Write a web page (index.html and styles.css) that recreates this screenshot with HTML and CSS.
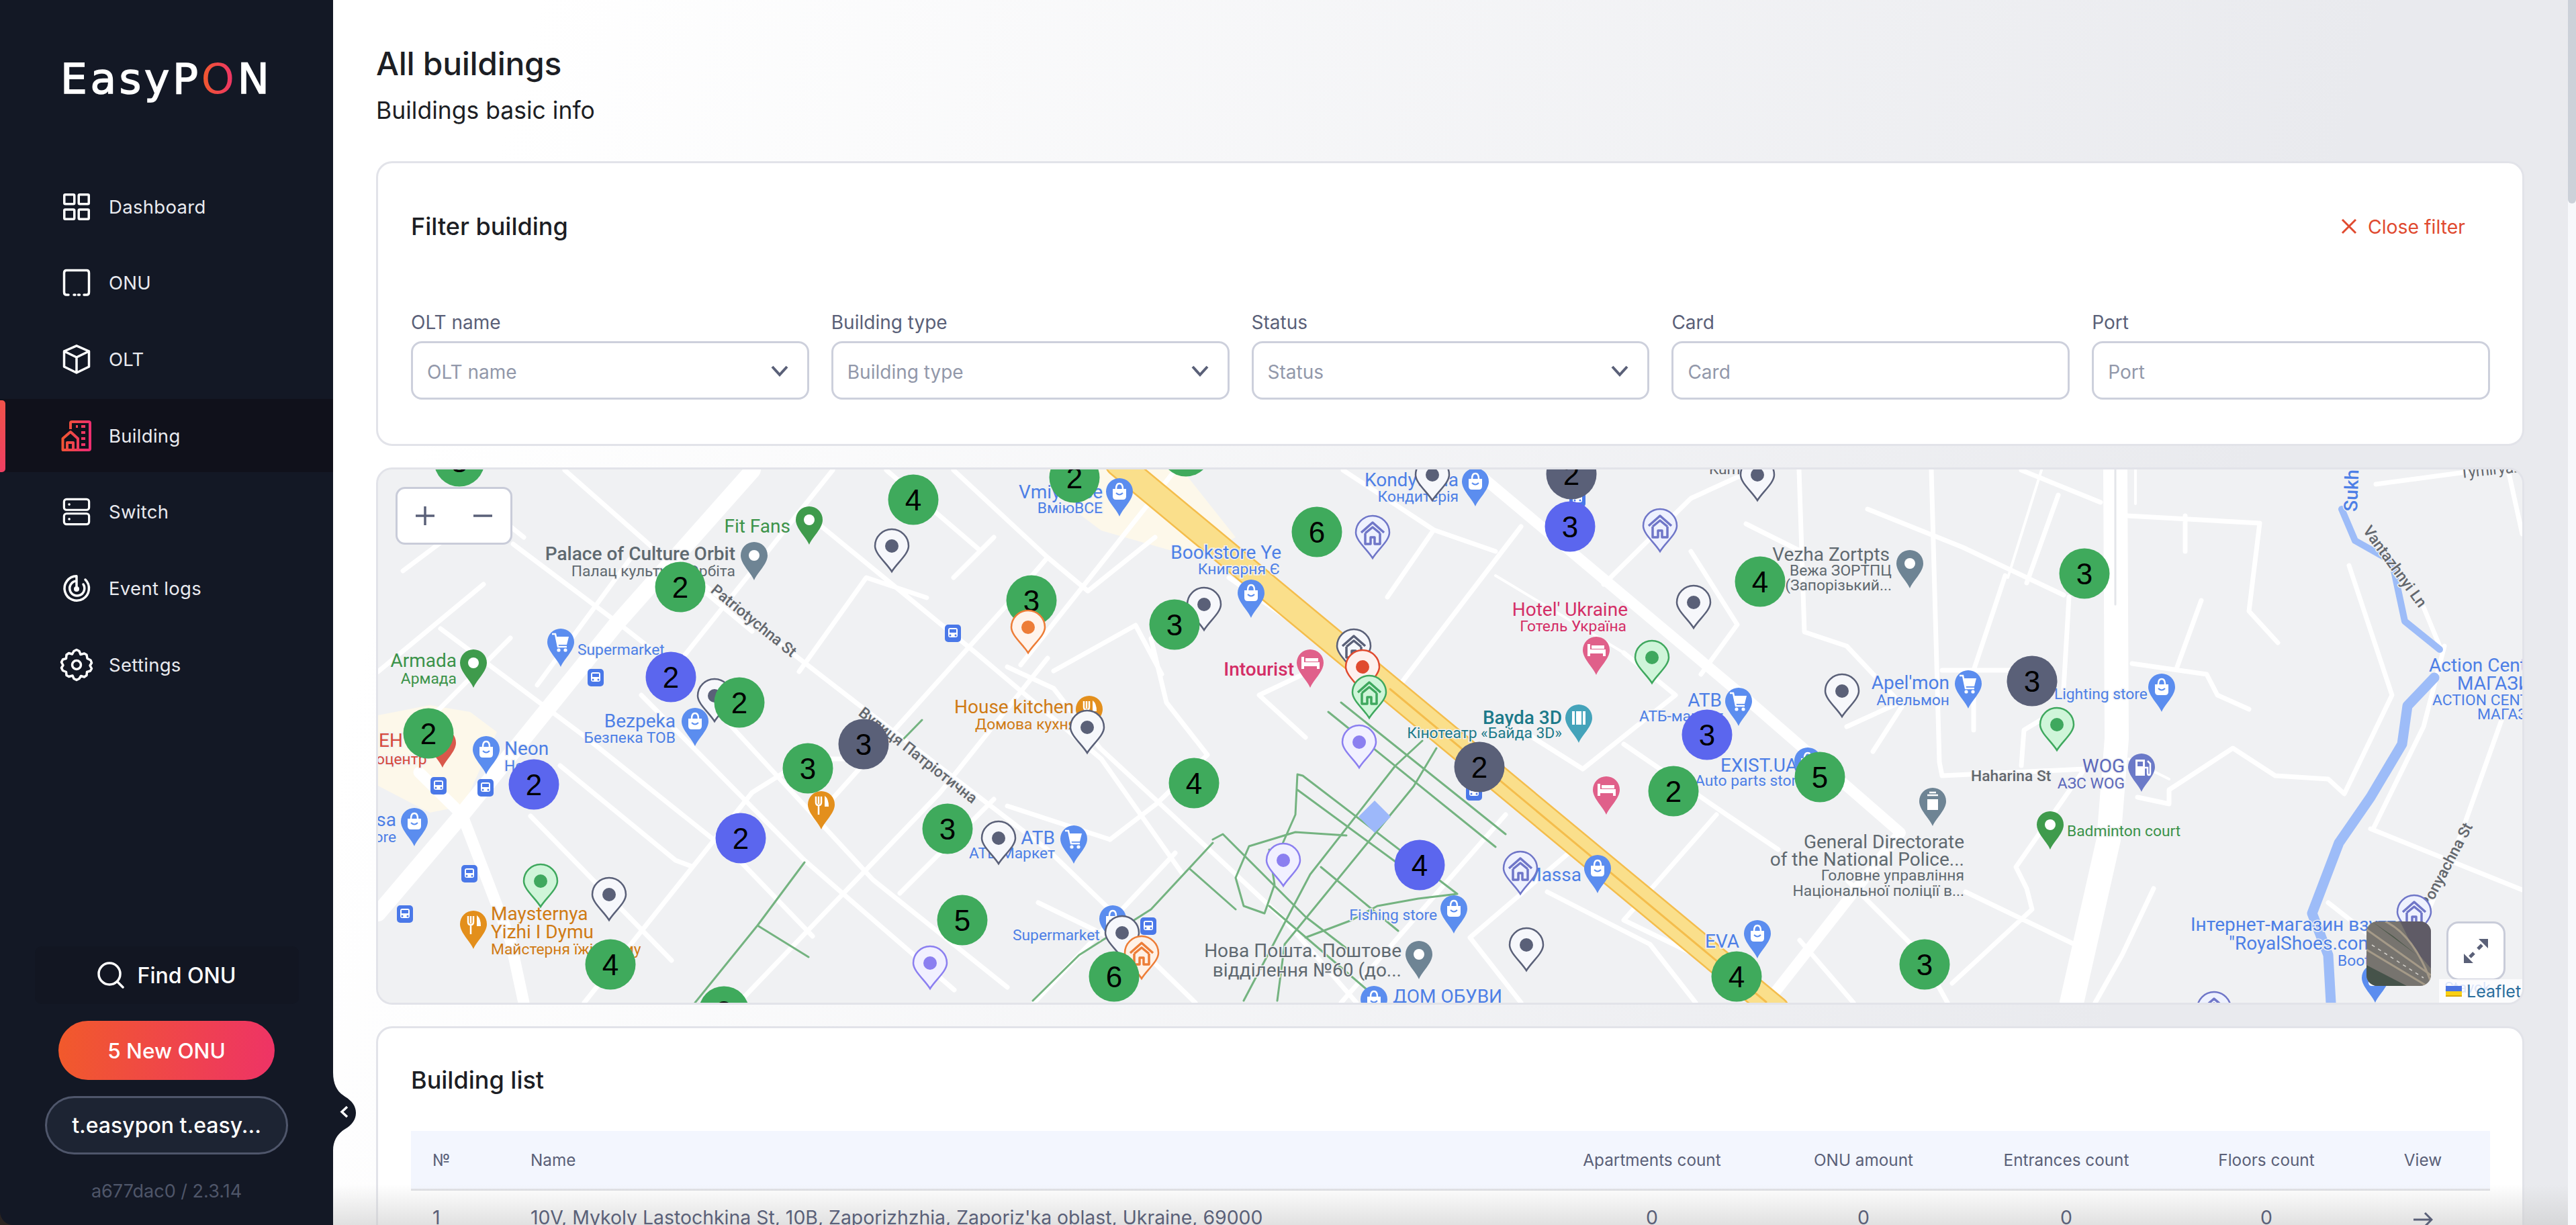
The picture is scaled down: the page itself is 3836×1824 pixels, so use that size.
FILE: index.html
```html
<!DOCTYPE html>
<html lang="en">
<head>
<meta charset="utf-8">
<title>EasyPON - All buildings</title>
<link rel="stylesheet" href="styles.css">
</head>
<body>
<svg class="defs" width="0" height="0" aria-hidden="true">
  <defs>
    <linearGradient id="brand" x1="0" y1="0" x2="1" y2="0.2"><stop offset="0" stop-color="#f15a2b"/><stop offset="1" stop-color="#ee2f6f"/></linearGradient>
    <g id="pin-dot"><path class="head" d="M0 0C-8-13-25-26-25-38A25 25 0 1 1 25-38C25-26 8-13 0 0Z"/><circle class="dot" cx="0" cy="-38" r="10"/></g>
    <g id="pin-house"><path class="head" d="M0 0C-8-13-25-26-25-38A25 25 0 1 1 25-38C25-26 8-13 0 0Z"/><path class="roof" d="M-17-38L0-53L17-38M-11-37V-21H-3V-31H3V-21H11V-37M-11-37L0-46L11-37"/></g>
    <path id="drop" d="M0 0C-5-12-20-24-20-37A20 20 0 1 1 20-37C20-24 5-12 0 0Z"/>
    <g id="poi-bag"><use href="#drop" class="dropfill"/><path class="wh" d="M-10-41H10V-30Q10-25 5-25H-5Q-10-25-10-30Z"/><path class="wl" d="M-5-41Q-5-49 0-49Q5-49 5-41"/><path class="cut" d="M-5-35Q0-30 5-35"/></g>
    <g id="poi-cart"><use href="#drop" class="dropfill"/><path class="wh" d="M-8-45H12L9-33H-5Z"/><path class="wl" d="M-13-49H-8L-4-30H9"/><circle class="wh" cx="-3" cy="-25" r="2.6"/><circle class="wh" cx="7" cy="-25" r="2.6"/></g>
    <g id="poi-dot"><use href="#drop" class="dropfill"/><circle class="wh" cx="0" cy="-37" r="8"/></g>
    <g id="poi-food"><use href="#drop" class="dropfill"/><path class="wl" d="M-8-49V-40Q-8-36-4-36V-22M0-49V-40Q0-36-4-36M-4-49V-38"/><path class="wh" d="M5-22V-50Q11-46 11-34H5Z"/></g>
    <g id="poi-bed"><use href="#drop" class="dropfill"/><path class="wh" d="M-13-46H-9V-38H14V-28H10V-32H-9V-28H-13Z"/><rect class="wh" x="-7" y="-44" width="19" height="5"/></g>
    <g id="poi-fuel"><use href="#drop" class="dropfill"/><path class="wh" d="M-9-48H5V-24H-9Z"/><rect class="cutf" x="-6" y="-45" width="8" height="7"/><path class="wl" d="M5-36H9V-28Q9-25 11-25Q13-25 13-28V-42L9-46"/></g>
    <g id="poi-film"><use href="#drop" class="dropfill"/><rect class="wh" x="-10" y="-47" width="20" height="20"/><path class="cutl" d="M-5-47V-27M5-47V-27"/></g>
    <g id="poi-gov"><use href="#drop" class="dropfill"/><path class="wh" d="M-8-40H8V-24H-8Z"/><path class="wl" d="M-8-46H8M-5-50H5"/></g>
    <g id="transit"><rect x="-12" y="-13" width="24" height="26" rx="5" class="tr"/><rect x="-7" y="-8" width="14" height="14" rx="3" class="wh"/><rect x="-5" y="-6" width="10" height="5" class="tr"/><circle cx="-4" cy="3" r="1.5" class="tr"/><circle cx="4" cy="3" r="1.5" class="tr"/></g>
  </defs>
</svg>

<aside class="sidebar">
  <div class="logo">Easy<span class="logo-p">P</span><span class="logo-o">O</span>N</div>
  <nav class="nav">
    <a class="nav-item">
      <svg class="nav-icon" viewBox="0 0 40 40"><g class="ic"><rect x="1.750" y="1.750" width="15" height="14" rx="1.500"/><rect x="23.250" y="1.750" width="15" height="14" rx="1.500"/><rect x="1.750" y="24" width="15" height="14.250" rx="1.500"/><rect x="23.250" y="24" width="15" height="14.250" rx="1.500"/></g></svg>
      <span>Dashboard</span></a>
    <a class="nav-item">
      <svg class="nav-icon" viewBox="0 0 40 40"><path class="ic" d="M8 38H5Q1.500 38 1.500 34V5.500Q1.500 1.500 5 1.500H35Q38.500 1.500 38.500 5.500V34Q38.500 38 35 38H31M16 38H18M22.500 38H24.500"/></svg>
      <span>ONU</span></a>
    <a class="nav-item">
      <svg class="nav-icon" viewBox="0 0 40 44"><path class="ic" d="M20 1.800L38.500 10V33L20 42L1.500 33V10ZM1.500 10L20 19L38.500 10M20 19V42"/></svg>
      <span>OLT</span></a>
    <a class="nav-item active">
      <svg class="nav-icon build" viewBox="0 0 44 46"><path class="ic-grad" d="M14 13V4Q14 2 16 2H41Q43 2 43 4V42Q43 44 41 44H2.500V27L14 17L25 27V44M31 44H2.500M9 44V33H18V44M22 9H25M30 9H36M30 18H36M30 27H36M30 36H36"/></svg>
      <span>Building</span></a>
    <a class="nav-item">
      <svg class="nav-icon" viewBox="0 0 44 44"><g class="ic"><rect x="1.500" y="1.500" width="41" height="17.500" rx="4"/><rect x="1.500" y="25" width="41" height="17.500" rx="4"/></g><circle class="wh" cx="10" cy="10" r="2"/><circle class="wh" cx="10" cy="34" r="2"/></svg>
      <span>Switch</span></a>
    <a class="nav-item">
      <svg class="nav-icon" viewBox="0 0 40 40"><path class="ic" d="M20 1.800A18.200 18.200 0 1 0 33 7M20 9A11 11 0 1 0 30 14M20 2V21"/><circle class="wh" cx="20" cy="21" r="4"/></svg>
      <span>Event logs</span></a>
    <a class="nav-item">
      <svg class="nav-icon gear" viewBox="0 0 48 48"><path class="ic" d="M20 3.500L24 1.500L28 3.500L30 8.500L35.500 7L39 9L40 14.500L45 17L46.500 21L44 25L46.500 29.500L44.500 33L39.500 34.500L39 39.500L35.500 42L30.500 40.500L28 44.500L24 46.500L20 44.500L18 40L12.500 41.500L9 39.500L8.500 34.500L3.500 32.500L1.500 28.500L4 24.500L1.500 20L3.500 16L8.500 14.500L9 9L12.500 6.500L17.500 8Z"/><circle class="ic" cx="24" cy="24" r="6.500"/></svg>
      <span>Settings</span></a>
  </nav>
  <div class="side-bottom">
    <button class="find-btn" type="button">
      <svg class="find-icon" viewBox="0 0 40 40"><circle class="ic" cx="18" cy="18" r="16"/><path class="ic" d="M30 30L38 38"/></svg>
      <span>Find ONU</span>
    </button>
    <button class="new-btn" type="button">5 New ONU</button>
    <button class="user-btn" type="button">t.easypon t.easy...</button>
    <div class="version">a677dac0 / 2.3.14</div>
  </div>
  <svg class="collapse" viewBox="0 0 36 116"><path class="collapse-bg" d="M0 0C0 20 8 30 18 36C28 42 34 50 34 60C34 70 28 78 18 84C8 90 0 100 0 116Z"/><path class="chev" d="M21 51L13 58.500L21 66"/></svg>
</aside>

<main class="main">
  <header class="head-block">
    <h1>All buildings</h1>
    <p>Buildings basic info</p>
  </header>

  <section class="card filter">
    <div class="card-row">
      <h2>Filter building</h2>
      <button class="close" type="button"><svg viewBox="0 0 24 24"><path d="M2 2L22 22M22 2L2 22"/></svg>Close filter</button>
    </div>
    <div class="fields">
      <div class="field"><label>OLT name</label><div class="input">OLT name<svg class="caret" viewBox="0 0 26 18"><path d="M2 3L13 15L24 3"/></svg></div></div>
      <div class="field"><label>Building type</label><div class="input">Building type<svg class="caret" viewBox="0 0 26 18"><path d="M2 3L13 15L24 3"/></svg></div></div>
      <div class="field"><label>Status</label><div class="input">Status<svg class="caret" viewBox="0 0 26 18"><path d="M2 3L13 15L24 3"/></svg></div></div>
      <div class="field"><label>Card</label><div class="input">Card</div></div>
      <div class="field"><label>Port</label><div class="input">Port</div></div>
    </div>
  </section>

  <section class="map">
    <svg class="map-svg" viewBox="563 699 3193 794" preserveAspectRatio="none">
      <rect x="563" y="699" width="3193" height="794" class="land"/>
      <path class="beige" d="M563 1065L640 1050L700 1060L740 1090L690 1200L640 1210L563 1170ZM1560 699H1760L1840 800L1780 830L1640 790L1600 760Z"/>

      <path class="st" d="M841 700L1000 840L1120 940M1204 768L1453 972L1640 1130L1760 1300M1051 873L1281 1051L1560 1265L1700 1400M764 810L917 925L1000 990M656 936L866 1093L1100 1280L1210 1394M955 1035L1198 1281L1421 1474M834 1140L1006 1281L1030 1290M790 1215L1000 1430M1060 1050L1300 1310L1500 1470M1000 1000L1240 700M1190 1000L1290 860L1380 890M1230 1200L1500 900L1560 830M1100 1493L1400 1180L1560 980M1340 1330L1480 1190M1540 1493L1750 1270M870 1493L1120 1180L1200 1130L1290 1130M563 1000L720 870M620 1090L760 950M600 850L680 790M800 1020L940 830M680 720L780 800M1420 700L1560 830L1620 880L1720 800M1320 700L1460 820M1480 800L1420 860M1750 700L1520 990"/>
      <path class="st" d="M2066 889L2135 789L2227 821M2265 784L2089 1014M1944 1098L1875 1035L1951 999M1714 951L1737 1046L1798 1124L1722 1197L1653 1250M1569 999L1691 931L1730 1004M1500 993L1569 1025L1638 1114L1745 1213L1913 1370L2020 1493M1653 1250L1500 1200M1546 1344L1707 1422L1780 1493M2242 1213L1997 1493M2342 1265L2189 1396L2265 1493M2304 1328L2457 1406L2525 1493M2556 1213L2418 1370L2525 1422M2418 1108L2571 1213L2648 1265M2357 1145L2265 1087M2357 1145L2495 1035L2418 972M2388 870L2518 742L2610 700M2518 821L2587 930L2533 1004M2000 700L2135 789M1830 860L1960 950L2010 1000"/>
      <path class="st" d="M2876 700L2888 1135L2892 1155L3104 1145M2679 700L2687 941L2750 962L2829 1046L2750 1082M2600 780L2680 820M2781 758L2923 815L3073 886M3010 700L3128 748M3065 737L3018 868M3081 889L3073 1025M2986 857L2939 998M2892 998L2994 998M2939 998L2939 1087M2836 1046L2789 1119M3010 1140L3014 1087L3049 1066M3104 1145L3002 1291L3018 1323L3026 1354L2907 1464M2927 1328L3089 1406M3168 768L3365 779L3349 910L3392 957M3254 821L3254 768M3278 894L3242 993M3175 988L3286 1004L3302 1035L3349 1056M3183 1187L3230 1197L3230 1176L3325 1114L3388 1155L3467 1160L3491 1182L3562 1035L3498 842M3530 1234L3756 1325M3640 962L3609 1082L3534 1234M3727 1067L3664 1244L3617 1354M3538 721L3672 703M3735 700L3756 795M3467 1344L3546 1406M3207 1323L3160 1422L3120 1493M3609 904L3633 962M2750 1310L2860 1420L2900 1493M2680 1400L2760 1493"/>
      <path class="st-thin" d="M2227 857L2418 972M3040 700L2990 860M3180 700V750M3170 1130L3230 1160"/>
      <path class="wide w1" d="M1121 700L917 930L688 1213L563 1360"/>
      <path class="wide w2" d="M688 1213L760 1400L780 1493M624 1150L688 1213"/>
      <path class="wide w3" d="M2195 700L2600 1040L2830 1240L2631 1493"/>
      <path class="wide w4" d="M3150 699L3152 1100L3140 1250L3085 1493"/>
      <path class="median" d="M3150 699V900"/>
      <path class="river" d="M3487 758L3507 805L3562 836L3581 925L3633 967"/>
      <path class="river r2" d="M3625 1009L3585 1051L3577 1108L3530 1187L3483 1255L3443 1360L3467 1422L3471 1493"/>
      <path class="road-edge" d="M1665 690L2645 1503"/>
      <path class="road-yel" d="M1665 690L2645 1503"/>
      <path class="road-line" d="M2070 1026L2630 1492"/>
      <path class="green" d="M1997 1046L2242 1242M1978 1060L2227 1261M1932 1153L1940 1155L2170 1331M1932 1176L2082 1286M2118 1103L2078 1140L1951 1302L1852 1490M2139 1114L2105 1171L1913 1406L1902 1490M1932 1153L1929 1213L1906 1265M2005 1244L1929 1239L1860 1260L1840 1307L1852 1349L1883 1360L1898 1317L1890 1265M1806 1250L1821 1242L1944 1365L2005 1412M1772 1294L1840 1354M1890 1349L2036 1474M1967 1291L2082 1386M1806 1255L1714 1354L1607 1422L1538 1490M2170 1331L2112 1338L2051 1349L2013 1370L1944 1396M1198 1284L1128 1378L1035 1493M1128 1378L1204 1425M1373 1072L1338 1108"/>
      <path class="diamond" d="M2047 1192L2071 1216L2047 1240L2023 1216Z"/>

      <!-- map labels -->
      <g class="lbl">
        <text class="l t c-gr b e" x="1095" y="834">Palace of Culture Orbit</text>
        <text class="l s c-gr e" x="1095" y="858">Палац культури Орбіта</text>
        <text class="l t c-g e" x="1177" y="793">Fit Fans</text>
        <text class="l s c-b" x="860" y="975">Supermarket</text>
        <text class="l t c-g e" x="680" y="993">Armada</text>
        <text class="l s c-g e" x="680" y="1018">Армада</text>
        <text class="l t c-b e" x="1006" y="1083">Bezpeka</text>
        <text class="l s c-b e" x="1006" y="1106">Безпека ТОВ</text>
        <text class="l t c-r" x="564" y="1112">ЕН</text>
        <text class="l s c-r" x="560" y="1138">оцентр</text>
        <text class="l t c-b" x="751" y="1124">Neon</text>
        <text class="l s c-b" x="751" y="1148">Неон</text>
        <text class="l t c-b e" x="590" y="1230">Massa</text>
        <text class="l s c-b e" x="590" y="1254">Store</text>
        <text class="l t c-o" x="731" y="1370">Maysternya</text>
        <text class="l t c-o" x="731" y="1397">Yizhi I Dymu</text>
        <text class="l s c-o" x="731" y="1421">Майстерня їжі і дому</text>
        <text class="l t c-b e" x="1571" y="1257">ATB</text>
        <text class="l s c-b e" x="1571" y="1278">АТБ-Маркет</text>
        <text class="l t c-b e" x="1642" y="742">VmiyuVse</text>
        <text class="l s c-b e" x="1642" y="764">ВміюВСЕ</text>
        <text class="l t c-b e" x="2172" y="724">Kondyteriia</text>
        <text class="l s c-b e" x="2172" y="747">Кондитерія</text>
        <text class="l t c-b e" x="1908" y="832">Bookstore Ye</text>
        <text class="l s c-b e" x="1906" y="855">Книгарня Є</text>
        <text class="l t c-p b e" x="1927" y="1006">Intourist</text>
        <text class="l t c-p e" x="2424" y="917">Hotel' Ukraine</text>
        <text class="l s c-p e" x="2422" y="940">Готель Україна</text>
        <text class="l t c-o" x="1421" y="1062">House kitchen</text>
        <text class="l s c-o" x="1452" y="1086">Домова кухня</text>
        <text class="l t c-t b e" x="2326" y="1078">Bayda 3D</text>
        <text class="l s c-t e" x="2326" y="1099">Кінотеатр «Байда 3D»</text>
        <text class="l t c-b e" x="2564" y="1052">ATB</text>
        <text class="l s c-b" x="2441" y="1074">АТБ-маркет</text>
        <text class="l t c-b" x="2562" y="1149">EXIST.UA</text>
        <text class="l s c-b" x="2524" y="1170">Auto parts store</text>
        <text class="l t c-b e" x="2355" y="1312">Massa</text>
        <text class="l s c-b e" x="2140" y="1370">Fishing store</text>
        <text class="l s c-b" x="1508" y="1400">Supermarket</text>
        <text class="l t c-gr e" x="2087" y="1425">Нова Пошта. Поштове</text>
        <text class="l t c-gr e" x="2087" y="1454">відділення №60 (до...</text>
        <text class="l t c-b e" x="2590" y="1411">EVA</text>
        <text class="l t c-b" x="2074" y="1493">ДОМ ОБУВИ</text>
        <text class="l t c-gr e" x="2814" y="835">Vezha Zortpts</text>
        <text class="l s c-gr e" x="2817" y="857">Вежа ЗОРТПЦ</text>
        <text class="l s c-gr e" x="2817" y="879">(Запорізький...</text>
        <text class="l t c-b e" x="2903" y="1026">Apel'mon</text>
        <text class="l s c-b e" x="2903" y="1050">Апельмон</text>
        <text class="l s c-b" x="3059" y="1041">Lighting store</text>
        <text class="l t c-i e" x="3164" y="1150">WOG</text>
        <text class="l s c-i e" x="3164" y="1174">АЗС WOG</text>
        <text class="l s c-st b" x="2935" y="1163">Haharina St</text>
        <text class="l t c-gr e" x="2925" y="1263">General Directorate</text>
        <text class="l t c-gr e" x="2925" y="1289">of the National Police...</text>
        <text class="l s c-gr e" x="2925" y="1311">Головне управління</text>
        <text class="l s c-gr e" x="2925" y="1334">Національної поліції в...</text>
        <text class="l s c-g" x="3078" y="1245">Badminton court</text>
        <text class="l t c-b" x="3617" y="1000">Action Center</text>
        <text class="l t c-b" x="3659" y="1027">МАГАЗИН</text>
        <text class="l s c-b" x="3622" y="1050">ACTION CENTER</text>
        <text class="l s c-b" x="3689" y="1071">МАГАЗИН</text>
        <text class="l t c-b" x="3262" y="1386">Інтернет-магазин взуття</text>
        <text class="l t c-b" x="3319" y="1414">"RoyalShoes.com"</text>
        <text class="l s c-b" x="3481" y="1438">Boots</text>
        <text class="l s c-b" x="3640" y="1478">Stavok</text>
        <text class="l t c-b b" x="3510" y="762" transform="rotate(-88 3510 762)">Sukh</text>
        <text class="l s c-st b" x="3518" y="790" transform="rotate(54 3518 790)">Vantazhnyi Ln</text>
        <text class="l s c-st b" x="3617" y="1354" transform="rotate(-62 3617 1354)">Ponyachna St</text>
        <text class="l s c-st" x="3664" y="712" transform="rotate(-6 3664 712)">Tymiryaz</text>
        <text class="l s c-st" x="2545" y="706">Kum</text>
        <text class="l s c-st b" x="1057" y="881" transform="rotate(39 1057 881)">Patriotychna St</text>
        <text class="l s c-st b" x="1277" y="1064" transform="rotate(38 1277 1064)">Вулиця Патріотична</text>
      </g>

      <!-- google pois -->
      <use href="#poi-dot" class="p-g" x="1205" y="811"/>
      <use href="#poi-dot" class="p-s" x="1123" y="864"/>
      <use href="#poi-cart" class="p-b" x="835" y="993"/>
      <use href="#poi-dot" class="p-g" x="705" y="1024"/>
      <use href="#poi-bag" class="p-b" x="1035" y="1111"/>
      <use href="#poi-dot" class="p-r" x="659" y="1143"/>
      <use href="#poi-bag" class="p-b" x="724" y="1153"/>
      <use href="#poi-bag" class="p-b" x="617" y="1260"/>
      <use href="#poi-food" class="p-o" x="1223" y="1235"/>
      <use href="#poi-food" class="p-o" x="705" y="1413"/>
      <use href="#poi-cart" class="p-b" x="1599" y="1286"/>
      <use href="#poi-bag" class="p-b" x="1667" y="769"/>
      <use href="#poi-bag" class="p-b" x="2197" y="754"/>
      <use href="#poi-bag" class="p-b" x="1863" y="920"/>
      <use href="#poi-bed" class="p-p" x="1951" y="1024"/>
      <use href="#poi-bed" class="p-p" x="2377" y="1005"/>
      <use href="#poi-food" class="p-o" x="1622" y="1093"/>
      <use href="#poi-film" class="p-t" x="2351" y="1106"/>
      <use href="#poi-cart" class="p-b" x="2589" y="1081"/>
      <use href="#poi-bag" class="p-b" x="2692" y="1170"/>
      <use href="#poi-bed" class="p-p" x="2392" y="1213"/>
      <use href="#poi-bag" class="p-b" x="2379" y="1330"/>
      <use href="#poi-bag" class="p-b" x="2165" y="1390"/>
      <use href="#poi-bag" class="p-b" x="1657" y="1405"/>
      <use href="#poi-dot" class="p-s" x="2113" y="1458"/>
      <use href="#poi-bag" class="p-b" x="2617" y="1427"/>
      <use href="#poi-bag" class="p-b" x="2046" y="1525"/>
      <use href="#poi-dot" class="p-s" x="2844" y="876"/>
      <use href="#poi-cart" class="p-b" x="2931" y="1055"/>
      <use href="#poi-bag" class="p-b" x="3219" y="1060"/>
      <use href="#poi-fuel" class="p-i" x="3189" y="1179"/>
      <use href="#poi-gov" class="p-s" x="2878" y="1230"/>
      <use href="#poi-dot" class="p-g" x="3053" y="1265"/>
      <use href="#poi-bag" class="p-b" x="3537" y="1493"/>

      <use href="#transit" x="887" y="1009"/>
      <use href="#transit" x="653" y="1170"/>
      <use href="#transit" x="723" y="1173"/>
      <use href="#transit" x="699" y="1301"/>
      <use href="#transit" x="603" y="1361"/>
      <use href="#transit" x="1419" y="943"/>
      <use href="#transit" x="1710" y="1379"/>
      <use href="#transit" x="2195" y="1179"/>
      <use href="#transit" x="2349" y="742"/>

      <!-- building pins below the clusters -->
      <use href="#pin-dot" class="m-d" x="1064" y="1074"/>
      <use href="#pin-dot" class="m-d" x="1793" y="938"/>
      <use href="#pin-dot" class="m-d" x="1328" y="851"/>

      <!-- clusters -->
      <g class="clusters">
        <circle class="cg" cx="684" cy="687" r="37.500"/><text x="684" y="687">3</text>
        <circle class="cg" cx="1360" cy="744" r="37.500"/><text x="1360" y="744">4</text>
        <circle class="cg" cx="1013" cy="874" r="37.500"/><text x="1013" y="874">2</text>
        <circle class="cg" cx="1536" cy="894" r="37.500"/><text x="1536" y="894">3</text>
        <circle class="cb" cx="999" cy="1008" r="37.500"/><text x="999" y="1008">2</text>
        <circle class="cg" cx="1101" cy="1046" r="37.500"/><text x="1101" y="1046">2</text>
        <circle class="cg" cx="638" cy="1092" r="37.500"/><text x="638" y="1092">2</text>
        <circle class="cb" cx="795" cy="1168" r="37.500"/><text x="795" y="1168">2</text>
        <circle class="cd" cx="1286" cy="1108" r="37.500"/><text x="1286" y="1108">3</text>
        <circle class="cg" cx="1203" cy="1144" r="37.500"/><text x="1203" y="1144">3</text>
        <circle class="cb" cx="1103" cy="1248" r="37.500"/><text x="1103" y="1248">2</text>
        <circle class="cg" cx="1411" cy="1234" r="37.500"/><text x="1411" y="1234">3</text>
        <circle class="cg" cx="1433" cy="1370" r="37.500"/><text x="1433" y="1370">5</text>
        <circle class="cg" cx="909" cy="1436" r="37.500"/><text x="909" y="1436">4</text>
        <circle class="cg" cx="1078" cy="1506" r="37.500"/><text x="1078" y="1506">3</text>
        <circle class="cg" cx="1600" cy="711" r="37.500"/><text x="1600" y="711">2</text>
        <circle class="cg" cx="1766" cy="672" r="37.500"/><text x="1766" y="672">3</text>
        <circle class="cg" cx="1961" cy="792" r="37.500"/><text x="1961" y="792">6</text>
        <circle class="cd" cx="2340" cy="706" r="37.500"/><text x="2340" y="706">2</text>
        <circle class="cb" cx="2338" cy="784" r="37.500"/><text x="2338" y="784">3</text>
        <circle class="cg" cx="2621" cy="866" r="37.500"/><text x="2621" y="866">4</text>
        <circle class="cg" cx="1749" cy="930" r="37.500"/><text x="1749" y="930">3</text>
        <circle class="cg" cx="1778" cy="1166" r="37.500"/><text x="1778" y="1166">4</text>
        <circle class="cd" cx="2203" cy="1142" r="37.500"/><text x="2203" y="1142">2</text>
        <circle class="cb" cx="2542" cy="1094" r="37.500"/><text x="2542" y="1094">3</text>
        <circle class="cg" cx="2492" cy="1178" r="37.500"/><text x="2492" y="1178">2</text>
        <circle class="cb" cx="2114" cy="1288" r="37.500"/><text x="2114" y="1288">4</text>
        <circle class="cg" cx="2586" cy="1454" r="37.500"/><text x="2586" y="1454">4</text>
        <circle class="cg" cx="3104" cy="854" r="37.500"/><text x="3104" y="854">3</text>
        <circle class="cd" cx="3026" cy="1014" r="37.500"/><text x="3026" y="1014">3</text>
        <circle class="cg" cx="2710" cy="1157" r="37.500"/><text x="2710" y="1157">5</text>
        <circle class="cg" cx="2866" cy="1436" r="37.500"/><text x="2866" y="1436">3</text>
      </g>

      <!-- building pins above the clusters -->
      <use href="#pin-dot" class="m-o" x="1531" y="972"/>
      <use href="#pin-dot" class="m-d" x="1487" y="1286"/>
      <use href="#pin-dot" class="m-l" x="805" y="1350"/>
      <use href="#pin-dot" class="m-d" x="907" y="1370"/>
      <use href="#pin-dot" class="m-v" x="1385" y="1472"/>
      <use href="#pin-dot" class="m-d" x="2133" y="745"/>
      <use href="#pin-dot" class="m-d" x="2617" y="745"/>
      <use href="#pin-house" class="m-h" x="2044" y="831"/>
      <use href="#pin-house" class="m-h" x="2472" y="821"/>
      <use href="#pin-dot" class="m-d" x="2522" y="935"/>
      <use href="#pin-house" class="m-d" x="2016" y="1000"/>
      <use href="#pin-dot" class="m-r" x="2029" y="1031"/>
      <use href="#pin-house" class="m-l" x="2039" y="1069"/>
      <use href="#pin-dot" class="m-l" x="2460" y="1017"/>
      <use href="#pin-dot" class="m-v" x="2024" y="1143"/>
      <use href="#pin-dot" class="m-d" x="1619" y="1121"/>
      <use href="#pin-dot" class="m-v" x="1911" y="1319"/>
      <use href="#pin-house" class="m-h" x="2264" y="1331"/>
      <use href="#pin-dot" class="m-d" x="2273" y="1445"/>
      <use href="#pin-dot" class="m-d" x="1671" y="1427"/>
      <use href="#pin-house" class="m-oh" x="1700" y="1457"/>
      <use href="#pin-dot" class="m-d" x="2743" y="1067"/>
      <use href="#pin-dot" class="m-l" x="3063" y="1117"/>
      <use href="#pin-house" class="m-h" x="3595" y="1396"/>
      <use href="#pin-house" class="m-h" x="3297" y="1540"/>
      <circle class="cg" cx="1659" cy="1454" r="37.500"/><text class="cn" x="1659" y="1454">6</text>
    </svg>

    <div class="zoom-ctl">
      <svg viewBox="0 0 30 30"><path d="M15 1V29M1 15H29"/></svg>
      <svg viewBox="0 0 30 30"><path d="M1 15H29"/></svg>
    </div>
    <div class="sat">
      <svg viewBox="0 0 96 96">
        <rect width="96" height="96" fill="#77746f"/>
        <path d="M0 0H50L70 40L96 70V0Z" fill="#5f5b66"/>
        <path d="M8 0L75 50L40 22Z" fill="#4a5748"/>
        <path d="M0 65L60 96H0Z" fill="#46534a"/>
        <path d="M0 12L96 80M0 42L90 96M28 0Q70 20 96 90" stroke="#a59a88" stroke-width="3" fill="none"/>
        <path d="M8 35L85 84" stroke="#d5d2cc" stroke-width="1.500" stroke-dasharray="5 6" fill="none"/>
      </svg>
    </div>
    <div class="expand"><svg viewBox="0 0 36 36"><path class="ex-f" d="M22 0H36V14ZM0 36V22L14 36Z"/><path class="ex-l" d="M27 9L21 15M9 27L15 21"/></svg></div>
    <div class="attr"><svg class="flag" viewBox="0 0 24 16"><rect width="24" height="8" fill="#4c74e0"/><rect y="8" width="24" height="6" fill="#fad013"/><rect y="14" width="24" height="2" fill="#d8a808"/></svg><span>Leaflet</span></div>
  </section>

  <section class="card list">
    <h2>Building list</h2>
    <table class="table">
      <colgroup><col class="c1"><col class="c2"><col class="c3"><col class="c4"><col class="c5"><col class="c6"><col class="c7"></colgroup>
      <thead>
        <tr><th class="left">№</th><th class="left">Name</th><th>Apartments count</th><th>ONU amount</th><th>Entrances count</th><th>Floors count</th><th>View</th></tr>
      </thead>
      <tbody>
        <tr><td class="left">1</td><td class="left">10V, Mykoly Lastochkina St, 10B, Zaporizhzhia, Zaporiz'ka oblast, Ukraine, 69000</td><td>0</td><td>0</td><td>0</td><td>0</td><td><svg class="arrow" viewBox="0 0 30 24"><path d="M1 12H28M18 2L28 12L18 22"/></svg></td></tr>
      </tbody>
    </table>
  </section>
  <div class="fade"></div>
</main>
<div class="scrollbar"><div class="thumb"></div></div>
</body>
</html>
```
FILE: styles.css
```css
*{box-sizing:border-box}
html,body{margin:0;height:100%;overflow:hidden}
body{display:flex;background:#2b2522;font-family:Inter,"Liberation Sans",sans-serif;color:#1c1e24}
.defs{position:absolute}
button{font-family:inherit;border:0;cursor:pointer}

.sidebar{position:relative;z-index:2;flex:0 0 496px;height:100%;background:#131825;border-bottom-left-radius:20px;display:flex;flex-direction:column}
.logo{height:64px;margin:86px 0 0 90px;font-family:"DejaVu Sans",Inter,sans-serif;font-size:63px;line-height:64px;font-weight:400;color:#fff;letter-spacing:4.600px;-webkit-text-stroke:1.500px #fff}
.logo-p{color:#fff}
.logo-o{background:linear-gradient(90deg,#f15a2b,#ee2f6f);-webkit-background-clip:text;background-clip:text;color:transparent;-webkit-text-stroke:0}
.nav{margin-top:103px;display:flex;flex-direction:column;gap:4.700px}
.nav-item{position:relative;height:109px;display:flex;align-items:center;padding-left:94px;font-size:27.500px;color:#e9eaef;letter-spacing:.3px}
.nav-item span{position:absolute;left:162px}
.nav-item.active{background:#10111b}
.nav-item.active::before{content:"";position:absolute;left:0;top:2px;bottom:0;width:8px;border-radius:0 5px 5px 0;background:linear-gradient(180deg,#f0524a,#ee3f62)}
.nav-icon{width:40px;height:44px;overflow:visible}
.nav-icon.build{width:44px;height:46px;margin-left:-3px}
.nav-icon.gear{width:48px;height:48px;margin-left:-4px}
.ic{fill:none;stroke:#fff;stroke-width:3.500;stroke-linecap:round;stroke-linejoin:round}
.ic-grad{fill:none;stroke:url(#brand);stroke-width:4;stroke-linejoin:round}
.wh{fill:#fff}
.side-bottom{margin-top:auto;display:flex;flex-direction:column;align-items:center;padding-bottom:34px}
.find-btn{width:393px;height:86px;background:#121622;border-radius:10px;color:#fff;font-size:32px;font-weight:500;display:flex;align-items:center;justify-content:center;gap:20px}
.find-icon{width:40px;height:40px}
.new-btn{margin-top:25px;width:322px;height:88px;border-radius:44px;background:linear-gradient(95deg,#f15a2b,#ee3366);color:#fff;font-size:31.500px;font-weight:500}
.user-btn{margin-top:24px;width:362px;height:87px;border-radius:44px;background:#1d2433;border:3px solid #4f566b;color:#fff;font-size:32px;font-weight:500}
.version{margin-top:38px;color:#4f5669;font-size:27px;line-height:33px}
.collapse{position:absolute;left:496px;top:1597px;width:36px;height:116px}
.collapse-bg{fill:#131825}
.chev{fill:none;stroke:#fff;stroke-width:3.500}

.main{position:relative;flex:1;min-width:0;height:100%;overflow:hidden;padding:0 65px 0 64px;background:linear-gradient(105deg,#fff 8%,#e9eaee 80%)}
.head-block{height:240px;padding-top:66px}
h1{margin:0;font-size:48px;line-height:58px;font-weight:500;color:#1c1e24;letter-spacing:-.3px}
p{margin:20px 0 0;font-size:35.500px;line-height:42px;color:#1c1e24}
.card{background:#fff;border:3px solid #e2e3e9;border-radius:24px}
h2{margin:0;font-size:36px;line-height:44px;font-weight:500;color:#1c1e24}
.filter{height:424px;padding:0 48px 0 49px}
.card-row{display:flex;justify-content:space-between;align-items:center;height:188px}
.close{background:none;color:#e04a2f;font-size:28.400px;display:flex;align-items:center;gap:16px;padding:0 37px 0 0}
.close svg{width:24px;height:24px;fill:none;stroke:#e04a2f;stroke-width:3}
.fields{display:grid;grid-template-columns:repeat(5,1fr);gap:33px;margin-top:32px}
.field label{display:block;font-size:28px;line-height:34px;color:#5a6078}
.input{position:relative;margin-top:11px;height:87px;border:3px solid #cdd0dc;border-radius:16px;padding:0 21px;font-size:28px;line-height:87px;color:#9298aa}
.caret{position:absolute;right:28px;top:32px;width:26px;height:18px;fill:none;stroke:#5a6078;stroke-width:4}

.map{position:relative;margin-top:32px;height:800px;border:3px solid #e2e3e9;border-radius:24px;overflow:hidden;background:#f0f1f3}
.map-svg{display:block;width:100%;height:100%}
.land{fill:#f0f1f3}
.beige{fill:#fdf8ea}
.st,.st-thin,.wide,.road-edge,.road-yel,.road-line,.green,.river,.median{fill:none;stroke-linejoin:round;stroke-linecap:round}
.st{stroke:#fff;stroke-width:7}
.st-thin{stroke:#fff;stroke-width:4}
.wide{stroke:#fff}
.w1{stroke-width:24}
.w2{stroke-width:17}
.w3{stroke-width:16}
.w4{stroke-width:36}
.median{stroke:#e4e6ea;stroke-width:3}
.road-edge{stroke:#f4bd4c;stroke-width:40}
.road-yel{stroke:#fadf8b;stroke-width:35}
.road-line{stroke:#f4bd4c;stroke-width:3}
.green{stroke:#74b380;stroke-width:3}
.river{stroke:#9dbcf8;stroke-width:10}
.r2{stroke-width:15}
.diamond{fill:#9db8fa}
.l{font-family:Roboto,"Liberation Sans",sans-serif;paint-order:stroke;stroke:#f0f1f3;stroke-width:3px}
.t{font-size:28px}
.s{font-size:22.800px}
.b{font-weight:500}
.e{text-anchor:end}
.c-b{fill:#4d7fe6}
.c-g{fill:#3b9349}
.c-gr{fill:#5f6970}
.c-st{fill:#63676d}
.c-o{fill:#d07b14}
.c-p{fill:#d42e66}
.c-t{fill:#1c7a8a}
.c-r{fill:#d74a3c}
.c-i{fill:#5b68bb}
.dropfill{fill:var(--c)}
.wl{fill:none;stroke:#fff;stroke-width:2.500}
.cut{fill:none;stroke:var(--c);stroke-width:2}
.cutf{fill:var(--c)}
.cutl{stroke:var(--c);stroke-width:2}
.tr{fill:#4a78e8}
.p-b{--c:#5b8def}
.p-g{--c:#3f9b4c}
.p-s{--c:#6e8494}
.p-o{--c:#e38f1c}
.p-p{--c:#e0608a}
.p-t{--c:#44a3ba}
.p-i{--c:#6b7ac8}
.p-r{--c:#d9584b}
.head{fill:var(--pf);stroke:var(--ps);stroke-width:2.500}
.dot{fill:var(--ps)}
.roof{fill:none;stroke:var(--ps);stroke-width:3.500;stroke-linejoin:round}
.m-d{--pf:#f6f7fb;--ps:#5a6078}
.m-l{--pf:#cff5d9;--ps:#3fa85e}
.m-v{--pf:#f1f0ff;--ps:#8b7ff0}
.m-o{--pf:#fff4ec;--ps:#ed7d37}
.m-oh{--pf:#fff1e6;--ps:#ed7d37}
.m-r{--pf:#fdf0ee;--ps:#e04a2f}
.m-h{--pf:#eef1fe;--ps:#6f76c8}
.cg{fill:#3faa5c}
.cb{fill:#5b66ee}
.cd{fill:#5a6078}
.clusters text,.cn{font-family:"Liberation Sans",Arial,sans-serif;font-size:44px;fill:#000;text-anchor:middle;dominant-baseline:central}
.zoom-ctl{position:absolute;left:26px;top:26px;width:174px;height:86px;background:#fff;border:3px solid #c9ccd9;border-radius:14px;display:flex;align-items:center;justify-content:space-between;padding:0 26px}
.zoom-ctl svg{width:30px;height:30px;fill:none;stroke:#5a6078;stroke-width:3.500}
.sat{position:absolute;right:136px;bottom:25px;width:96px;height:96px;border-radius:16px;overflow:hidden}
.sat svg{display:block;width:96px;height:96px}
.expand{position:absolute;right:25px;bottom:33px;width:88px;height:88px;background:#fff;border:3px solid #c9ccd9;border-radius:18px;display:flex;align-items:center;justify-content:center}
.expand svg{width:36px;height:36px}
.ex-f{fill:#5a6078}
.ex-l{fill:none;stroke:#5a6078;stroke-width:5}
.attr{position:absolute;right:0;bottom:0;width:124px;height:35px;background:rgba(255,255,255,.8);display:flex;align-items:center;gap:7px;padding-left:10px;font-size:25px;color:#2b6f9e}
.flag{width:24px;height:16px}

.list{margin-top:32px;height:600px;padding:0 48px 0 49px}
.list h2{height:153px;padding-top:55px}
.table{width:3096px;border-collapse:collapse;table-layout:fixed}
.c1{width:146px}
.c3{width:356px}
.c4{width:274px}
.c5{width:330px}
.c6{width:266px}
.c7{width:200px}
th{height:87px;background:#f3f6fe;border-bottom:3px solid #e0e1e5;font-size:24.300px;font-weight:400;color:#5a6078;text-align:center;padding:0}
td{position:relative;z-index:1;height:82px;font-size:28.400px;color:#5a6078;text-align:center;padding:0}
.left{text-align:left;padding-left:32px}
.arrow{width:30px;height:24px;fill:none;stroke:#5a6078;stroke-width:3;vertical-align:middle}
.fade{position:absolute;left:0;right:0;bottom:0;height:60px;background:linear-gradient(180deg,rgba(200,200,200,0),rgba(200,200,200,.55))}
.scrollbar{flex:0 0 12px;height:100%;background:#f7f8fb}
.thumb{height:303px;background:#ccd1d9;border-radius:0 0 6px 6px}
```
